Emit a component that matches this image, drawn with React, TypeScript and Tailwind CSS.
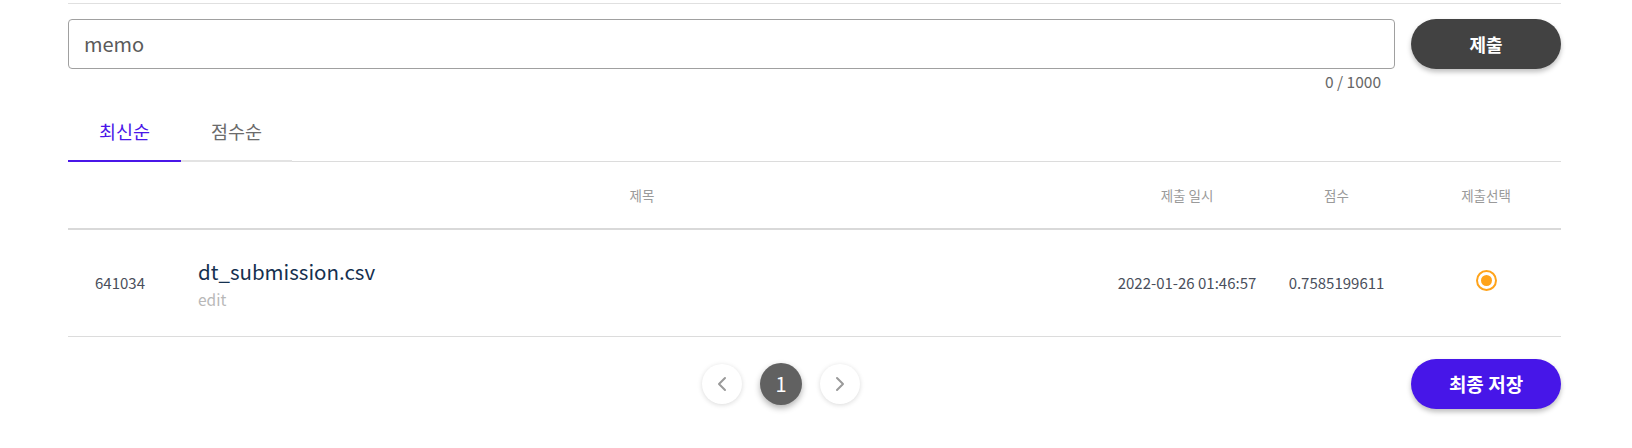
import React from "react";
import { ChevronLeft, ChevronRight } from "lucide-react";

const font = { fontFamily: '"Noto Sans CJK KR", "Noto Sans", sans-serif' };

export default function App() {
  return (
    <div
      className="w-[1632px] bg-white pl-[68px] pr-[71px] pt-[3px] font-['Noto_Sans_CJK_KR',sans-serif]"
      style={font}
    >
      <div className="border-t border-[#e0e0e0]" />

      {/* memo input + submit */}
      <div className="mt-[15px] flex gap-4">
        <div className="flex-1">
          <div className="flex h-[50px] items-center rounded-[4px] border border-[#a0a0a0] px-[15px]">
            <span className="text-[20px] text-[#5a5a5a]">memo</span>
          </div>
          <div className="mt-[2px] pr-[14px] text-right text-[15.5px] leading-[20px] text-[#666]">
            0 / 1000
          </div>
        </div>
        <button className="h-[50px] w-[150px] rounded-full bg-[#424242] text-[18px] font-bold text-white shadow-[0_3px_5px_rgba(0,0,0,0.25)]">
          제출
        </button>
      </div>

      {/* tabs */}
      <div className="mt-[22px] flex border-b border-[#dcdcdc]">
        <div className="-mb-px w-[113px] border-b-2 border-[#4a17e8] pb-[17px] pt-[6px] text-center text-[18.5px] leading-[24px] text-[#4a17e8]">
          최신순
        </div>
        <div className="-mb-px w-[111px] border-b-2 border-[#e3e3e3] pb-[17px] pt-[6px] text-center text-[18.5px] leading-[24px] text-[#6b6b6b]">
          점수순
        </div>
      </div>

      {/* header */}
      <div className="grid h-[68px] grid-cols-[104px_1fr_150px_149px_150px] items-center border-b-2 border-[#d9d9d9] text-[13.5px] text-[#9a9a9a]">
        <div />
        <div className="text-center">제목</div>
        <div className="text-center">제출 일시</div>
        <div className="text-center">점수</div>
        <div className="text-center">제출선택</div>
      </div>

      {/* row */}
      <div className="grid h-[107px] grid-cols-[104px_1fr_150px_149px_150px] items-center border-b border-[#dcdcdc] text-[15px] text-[#4a4f5c]">
        <div className="text-center">641034</div>
        <div className="pl-[26px]">
          <div className="text-[20.5px] leading-[26px] text-[#15304f]">dt_submission.csv</div>
          <div className="mt-[6px] text-[15.5px] leading-[18px] text-[#b8b8b8]">edit</div>
        </div>
        <div className="text-center">2022-01-26 01:46:57</div>
        <div className="text-center">0.7585199611</div>
        <div className="flex justify-center">
          <div className="-mt-[6px] flex h-[21px] w-[21px] items-center justify-center rounded-full border-2 border-[#ffa31a]">
            <div className="h-[11px] w-[11px] rounded-full bg-[#ffa31a]" />
          </div>
        </div>
      </div>

      {/* pagination + final save */}
      <div className="mt-[22px] flex items-center pb-[39px]">
        <div className="ml-[634px] flex items-center gap-[18px]">
          <button className="flex h-[40px] w-[40px] items-center justify-center rounded-full bg-white shadow-[0_1px_5px_rgba(0,0,0,0.15)]">
            <ChevronLeft size={24} strokeWidth={2} color="#9a9a9a" />
          </button>
          <button className="flex h-[42px] w-[42px] items-center justify-center rounded-full bg-[#616161] text-[20px] text-white shadow-[0_3px_6px_rgba(0,0,0,0.3)]">
            1
          </button>
          <button className="flex h-[40px] w-[40px] items-center justify-center rounded-full bg-white shadow-[0_1px_5px_rgba(0,0,0,0.15)]">
            <ChevronRight size={24} strokeWidth={2} color="#9a9a9a" />
          </button>
        </div>
        <button className="ml-auto h-[50px] w-[150px] rounded-full bg-[#4716e8] text-[19px] font-bold text-white shadow-[0_3px_5px_rgba(0,0,0,0.25)]">
          최종 저장
        </button>
      </div>
    </div>
  );
}
